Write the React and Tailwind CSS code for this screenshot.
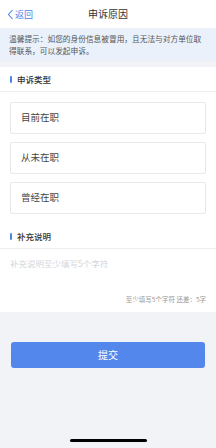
export default function App() {
  const font = { fontFamily: '"Noto Sans CJK SC", "Noto Sans", sans-serif' };
  return (
    <div className="w-[216px] h-[448px] bg-[#f2f3f7] flex flex-col relative overflow-hidden" style={font}>
      <div className="h-[28px] bg-white flex items-center relative shrink-0">
        <div className="flex items-center pl-[7px] text-[#4a86e8]">
          <svg width="7" height="11" viewBox="0 0 7 11" fill="none" stroke="#4a86e8" strokeWidth="1.1">
            <path d="M5.5 1 L1.5 5.5 L5.5 10" />
          </svg>
          <span className="text-[9px] leading-none ml-[1px]">返回</span>
        </div>
        <div className="absolute left-0 right-0 text-center text-[10px] text-[#333] leading-none pointer-events-none">申诉原因</div>
      </div>
      <div className="bg-[#eaf1fb] px-[9px] pt-[5px] pb-[5px] text-[7.7px] leading-[12px] text-[#555] h-[33px] shrink-0">
        温馨提示：如您的身份信息被冒用，且无法与对方单位取得联系，可以发起申诉。
      </div>
      <div className="h-[6px] shrink-0" />
      <div className="bg-white flex flex-col shrink-0">
        <div className="h-[25px] flex items-center pl-[10px] border-b border-[#eeeeee]">
          <div className="w-[2px] h-[7px] bg-[#4a86e8] rounded-[1px]" />
          <span className="ml-[5px] text-[8.5px] font-medium text-[#333] leading-none">申诉类型</span>
        </div>
        <div className="flex flex-col gap-[8px] px-[10px] pt-[10px] pb-[11px]">
          {["目前在职", "从未在职", "曾经在职"].map((t) => (
            <div key={t} className="h-[32px] border border-[#e8e8e8] rounded-[2px] flex items-center pl-[10px] text-[9.5px] text-[#444] leading-none">
              {t}
            </div>
          ))}
        </div>
        <div className="h-[24px] flex items-center pl-[10px] border-b border-[#eeeeee]">
          <div className="w-[2px] h-[7px] bg-[#4a86e8] rounded-[1px]" />
          <span className="ml-[5px] text-[8.5px] font-medium text-[#333] leading-none">补充说明</span>
        </div>
        <div className="h-[63px] flex flex-col px-[10px] pt-[10px]">
          <div className="text-[8.5px] text-[#d4d6da] leading-none">补充说明至少填写5个字符</div>
          <div className="flex-1" />
          <div className="text-right text-[6.5px] text-[#999] leading-none pb-[10px]">至少填写5个字符 还差：5字</div>
        </div>
      </div>
      <div className="px-[11px] pt-[30px]">
        <div className="h-[26px] bg-[#5387ec] rounded-[3px] flex items-center justify-center text-white text-[10px] leading-none">提交</div>
      </div>
      <div className="absolute bottom-[6px] left-[70px] w-[77px] h-[3px] rounded-full bg-black" />
    </div>
  );
}
